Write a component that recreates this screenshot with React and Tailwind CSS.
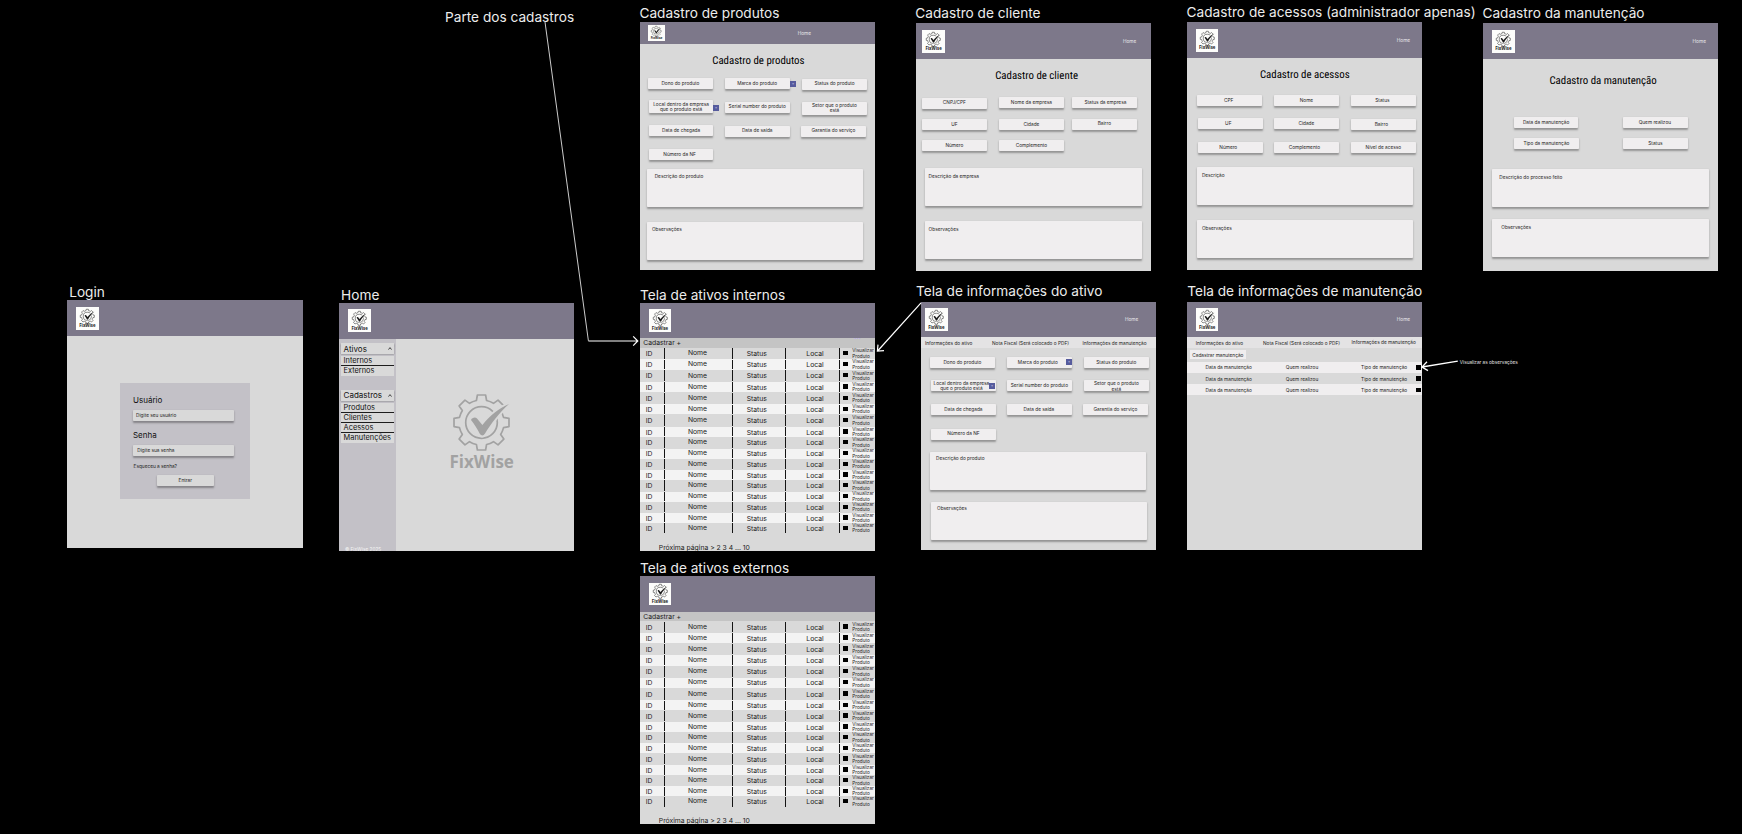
import React from "react";
import { clsx } from "clsx";

/* ---------- logo ---------- */

function gearPath(cx, cy, outer, root) {
  const pt = (r, deg) => {
    const a = (deg * Math.PI) / 180;
    return `${(cx + r * Math.sin(a)).toFixed(2)} ${(cy - r * Math.cos(a)).toFixed(2)}`;
  };
  const parts = [];
  for (let i = 0; i < 8; i += 1) {
    const a = i * 45;
    parts.push(`${i ? "L" : "M"}${pt(root, a - 13)} L${pt(outer, a - 8.5)} L${pt(outer, a + 8.5)} L${pt(root, a + 13)}`);
    parts.push(`A${root} ${root} 0 0 1 ${pt(root, a + 32)}`);
  }
  return `${parts.join(" ")} Z`;
}

const GEAR = gearPath(28.5, 28.5, 27.8, 22.6);
const CHECK = "M18 26 C19 23.6 22.5 22.8 24 24.6 L29.4 31 C37 21.5 46 14 56 10 C46.5 18.5 38 29.5 32 39.6 C30.6 42 28.4 42.2 26.8 39.8 C24.4 35 21.4 30.4 18 26 Z";

function Gear({ className, ring, back, thick }) {
  return (
    <svg viewBox="0 0 57 57" className={clsx("block shrink-0 overflow-visible", className)} fill="none">
      <path d={GEAR} stroke={ring} strokeWidth={thick} strokeLinejoin="round" />
      <circle cx="28.5" cy="28.5" r="15.8" stroke={ring} strokeWidth={thick} />
      <path d={CHECK} fill={ring} stroke={back} strokeWidth="4" paintOrder="stroke" />
    </svg>
  );
}

function Logo({ small, className }) {
  return (
    <div
      className={clsx(
        "flex shrink-0 flex-col items-center bg-[#fdfdfb]",
        small ? "h-[16px] w-[16.4px] pt-[1px]" : "h-[22.6px] w-[22.6px] pt-[1.6px]",
        className
      )}
    >
      <Gear className={small ? "h-[10.4px] w-[10.4px]" : "h-[14.6px] w-[14.6px]"} ring="#1f1f1f" back="#fdfdfb" thick="2" />
      <span
        className={clsx(
          "whitespace-nowrap font-['Open_Sans',sans-serif] font-bold text-[#1a1a1a]",
          small ? "text-[3.1px] leading-[3.4px]" : "text-[4.3px] leading-[4.4px]"
        )}
      >
        FixWise
      </span>
    </div>
  );
}

/* ---------- board parts ---------- */

function Board({ title, place, titleClass, frameClass, children }) {
  return (
    <section className={clsx("absolute flex w-[235.2px] flex-col", place)}>
      <h2 className={clsx("h-[14px] whitespace-nowrap text-[13.66px] leading-[14.4px] text-[#ececec]", titleClass)}>{title}</h2>
      <div className={clsx("flex h-[248.2px] w-full flex-col overflow-hidden bg-[#d9d9d9]", frameClass)}>{children}</div>
    </section>
  );
}

function Header({ logoClass = "ml-[8.7px] mt-[6.7px]", homeClass, small }) {
  return (
    <header className={clsx("flex shrink-0 items-start bg-[#7d788a]", small ? "h-[21.8px]" : "h-[35.4px]")}>
      <Logo small={small} className={logoClass} />
      {homeClass && <span className={clsx("leading-[6px] text-[#e9e8ec]", homeClass)}>Home</span>}
    </header>
  );
}

function FormTitle({ children, className }) {
  return (
    <h3
      className={clsx(
        "shrink-0 text-center font-['Roboto_Condensed','Roboto',sans-serif] text-[10.85px] leading-[12px] whitespace-nowrap text-black [text-rendering:geometricPrecision]",
        className
      )}
    >
      {children}
    </h3>
  );
}

function Badge({ className }) {
  return (
    <i className={clsx("absolute flex h-[5.6px] w-[5.6px] items-center justify-center bg-[#565b9d] text-[4px] leading-none text-[#dcdcf0] not-italic", className)}>
      +
    </i>
  );
}

const SHADOW = "shadow-[0_1.5px_2px_rgba(0,0,0,0.32)]";

function Field({ children, className, height = "h-[11px]", badge, shift }) {
  return (
    <div
      className={clsx(
        "relative flex w-[64.8px] shrink-0 items-center justify-center rounded-[0.7px] bg-[#f0eeef] text-center leading-[5.6px] whitespace-nowrap",
        SHADOW,
        height,
        className
      )}
    >
      <span className={shift}>{children}</span>
      {badge && <Badge className={badge} />}
    </div>
  );
}

function Row({ className, children }) {
  return <div className={clsx("flex shrink-0 items-start", className)}>{children}</div>;
}

function Area({ children, className }) {
  return (
    <div className={clsx("h-[38px] w-[216.3px] shrink-0 rounded-[0.7px] bg-[#f0eeef] leading-[6px]", SHADOW, className)}>{children}</div>
  );
}

/* ---------- asset tables ---------- */

const ROW_HEIGHTS = [
  "h-[11.3px]", "h-[10.7px]", "h-[11.7px]", "h-[10.7px]", "h-[12px]", "h-[10px]", "h-[12.6px]", "h-[10px]", "h-[11.7px]",
  "h-[10px]", "h-[11.3px]", "h-[10px]", "h-[11.7px]", "h-[10.3px]", "h-[11px]", "h-[10px]", "h-[11px]",
];

function Bar() {
  return <span className="my-[0.5px] w-px shrink-0 self-stretch bg-[#151515]" />;
}

function AssetTable({ dots }) {
  return (
    <>
      <div className="relative shrink-0">
        <Header logoClass="ml-[8.7px] mt-[6.4px]" />
        {dots && <span className="absolute right-[14.5px] bottom-0 text-[8px] leading-[4px] text-[#b7a8ee]">...</span>}
      </div>
      <div className="flex h-[9.6px] shrink-0 items-center bg-[#c4c4c4] pt-[0.6px] pl-[3.2px] text-[6.8px] leading-[8px]">Cadastrar +</div>
      {ROW_HEIGHTS.map((h, i) => (
        <div key={i} className={clsx("flex shrink-0 items-center text-[6.8px] leading-[8px] text-[#1c1c1c]", h, i % 2 === 1 && "bg-[#f3f3f3]")}>
          <span className="w-[24.3px] shrink-0 pt-[1.4px] pl-[5.8px]">ID</span>
          <Bar />
          <span className="w-[67px] shrink-0 pb-[0.6px] pl-[22.6px]">Nome</span>
          <Bar />
          <span className="w-[52px] shrink-0 pt-[1.4px] pl-[13.4px]">Status</span>
          <Bar />
          <span className="w-[53px] shrink-0 pt-[1.4px] pl-[20px]">Local</span>
          <Bar />
          <span className="mb-[1px] ml-[3px] h-[4.4px] w-[4.8px] shrink-0 bg-black" />
          <span className="ml-[4.2px] text-[4.7px] leading-[5.3px]">
            Visualizar
            <br />
            Produto
          </span>
        </div>
      ))}
      <div className="mt-[9px] shrink-0 pl-[18.8px] text-[6.8px] leading-[9px] text-[#1c1c1c]">Próxima página &gt; 2 3 4 ... 10</div>
    </>
  );
}

/* ---------- sidebar ---------- */

function MenuHead({ children, className }) {
  return (
    <div
      className={clsx(
        "relative flex h-[11.2px] shrink-0 items-center justify-between bg-[#d9d9d9] pr-[2px] pl-[2.7px] text-[8px] leading-[10px] shadow-[0_1.4px_1.4px_rgba(0,0,0,0.45)]",
        className
      )}
    >
      {children}
      <svg viewBox="0 0 4 3" className="h-[3px] w-[4px]" fill="none" stroke="#222" strokeWidth="0.8">
        <path d="M0.5 2.6 L2 0.6 L3.5 2.6" />
      </svg>
    </div>
  );
}

function MenuItem({ children, last }) {
  return (
    <div
      className={clsx(
        "flex shrink-0 items-center bg-[#d9d9d9] pl-[2.7px] text-[7.4px] leading-[9px]",
        last ? "h-[9.6px]" : "h-[10.2px] border-b border-[#1d1d1d] pt-[0.8px]"
      )}
    >
      {children}
    </div>
  );
}

/* ---------- page ---------- */

const MAINT_ROWS = [
  { h: "h-[11px]", bg: "bg-[#f0eeef]" },
  { h: "h-[11.4px]", bg: "" },
  { h: "h-[11px]", bg: "bg-[#f0eeef]" },
];

export default function App() {
  return (
    <main className="relative h-[834px] w-[1742px] overflow-hidden bg-black font-['Inter',sans-serif] text-[4.76px] text-[#1c1c1c]">
      <p className="absolute top-[10px] left-[445px] text-[13.66px] leading-[14px] whitespace-nowrap text-[#ececec]">Parte dos cadastros</p>

      <Board title="Cadastro de produtos" place="top-[6px] left-[640px]" titleClass="-ml-[0.6px]" frameClass="mt-[2px]">
        <Header small logoClass="ml-[8.3px] mt-[3.4px]" homeClass="ml-[133px] mt-[8.2px]" />
        <FormTitle className="mt-[11px] h-[23.2px] pl-[1.6px]">Cadastro de produtos</FormTitle>
        <Row className="h-[22px] pl-[8px]">
          <Field>Dono do produto</Field>
          <Field className="ml-[12px]" badge="top-[3px] left-[65.4px]">Marca do produto</Field>
          <Field className="mt-[0.7px] ml-[12.5px]">Status do produto</Field>
        </Row>
        <Row className="h-[25.3px] pl-[8.7px]">
          <Field height="h-[13px]" badge="top-[5px] left-[64.6px]" shift="pt-[1.4px]">
            Local dentro da empresa
            <br />
            que o produto está
          </Field>
          <Field className="mt-[1.6px] ml-[11.3px]">Serial number do produto</Field>
          <Field className="mt-[1.6px] ml-[12.5px]" height="h-[13.4px]">
            Setor que o produto
            <br />
            está
          </Field>
        </Row>
        <Row className="h-[24px] pl-[8.7px]">
          <Field>Data de chegada</Field>
          <Field className="mt-[0.3px] ml-[11.3px]">Data de saída</Field>
          <Field className="mt-[0.3px] ml-[11.5px]">Garantia do serviço</Field>
        </Row>
        <Row className="h-[19.7px] pl-[8.7px]">
          <Field shift="pr-[3px]">Número da NF</Field>
        </Row>
        <Area className="ml-[6.7px] pt-[4px] pl-[8px]">Descrição do produto</Area>
        <Area className="mt-[15px] ml-[6.7px] pt-[4px] pl-[5.3px]">Observações</Area>
      </Board>

      <Board title="Cadastro de cliente" place="top-[6.3px] left-[916px]" titleClass="-ml-[0.7px]" frameClass="mt-[3px]">
        <Header logoClass="ml-[6.3px] mt-[6.7px]" homeClass="ml-[178px] mt-[15px]" />
        <FormTitle className="mt-[11.4px] h-[26.9px] pl-[6px]">Cadastro de cliente</FormTitle>
        <Row className="h-[22.3px] pl-[6px]">
          <Field className="mt-[0.7px]">CNPJ/CPF</Field>
          <Field className="ml-[12.2px]">Nome da empresa</Field>
          <Field className="ml-[8.2px]" shift="pt-[1px] pl-[2px]">Status da empresa</Field>
        </Row>
        <Row className="h-[21px] pl-[6px]">
          <Field>UF</Field>
          <Field className="ml-[12.2px]">Cidade</Field>
          <Field className="ml-[8.2px]" shift="pb-[1px]">Bairro</Field>
        </Row>
        <Row className="h-[27.7px] pl-[6px]">
          <Field shift="pt-[0.6px]">Número</Field>
          <Field className="ml-[12.2px]" shift="pt-[0.6px]">Complemento</Field>
        </Row>
        <Area className="ml-[9.3px] pt-[5px] pl-[3.3px]">Descrição da empresa</Area>
        <Area className="mt-[15px] ml-[9.3px] pt-[5px] pl-[3.3px]">Observações</Area>
      </Board>

      <Board title="Cadastro de acessos (administrador apenas)" place="top-[5px] left-[1187.2px]" titleClass="-ml-[0.6px]" frameClass="mt-[3.2px]">
        <Header logoClass="ml-[8.7px] mt-[6.8px]" homeClass="ml-[178.3px] mt-[14.8px]" />
        <FormTitle className="mt-[11.6px] h-[25.8px]">Cadastro de acessos</FormTitle>
        <Row className="h-[23.4px] pl-[10px]">
          <Field shift="pr-[2px]">CPF</Field>
          <Field className="ml-[12px]">Nome</Field>
          <Field className="ml-[12.2px]" shift="pr-[2px]">Status</Field>
        </Row>
        <Row className="h-[24px] pl-[10.7px]">
          <Field shift="pr-[4px]">UF</Field>
          <Field className="ml-[11.3px]">Cidade</Field>
          <Field className="mt-[0.6px] ml-[12.2px]" shift="pr-[4px]">Bairro</Field>
        </Row>
        <Row className="h-[24.6px] pl-[10.7px]">
          <Field shift="pr-[4px]">Número</Field>
          <Field className="ml-[11.3px]" shift="pr-[4px]">Complemento</Field>
          <Field className="-mt-[0.7px] ml-[12.2px]" shift="pt-[1px]">Nível de acesso</Field>
        </Row>
        <Area className="ml-[10px] pt-[4.7px] pl-[4.7px]">Descrição</Area>
        <Area className="mt-[15.4px] ml-[9.7px] pt-[4.7px] pl-[5px]">Observações</Area>
      </Board>

      <Board title="Cadastro da manutenção" place="top-[6.3px] left-[1483px]" titleClass="-ml-[0.6px]" frameClass="mt-[3px]">
        <Header logoClass="ml-[9px] mt-[6.7px]" homeClass="ml-[178px] mt-[15px]" />
        <FormTitle className="mt-[16px] h-[42.3px] pl-[5px]">Cadastro da manutenção</FormTitle>
        <Row className="h-[21px] pl-[30.7px]">
          <Field shift="pt-[0.8px]">Data da manutenção</Field>
          <Field className="ml-[44.5px]" shift="pr-[1px]">Quem realizou</Field>
        </Row>
        <Row className="h-[31px] pl-[31px]">
          <Field>Tipo da manutenção</Field>
          <Field className="ml-[44.2px]">Status</Field>
        </Row>
        <Area className="ml-[9.3px] pt-[5px] pl-[7px]">Descrição do processo feito</Area>
        <Area className="mt-[12px] ml-[9.3px] pt-[5px] pl-[9px]">Observações</Area>
      </Board>

      <Board title="Login" place="top-[285px] left-[67.4px]" titleClass="pl-[1.8px]" frameClass="mt-[1.2px]">
        <Header logoClass="ml-[8.7px] mt-[7px]" />
        <div className="mt-[47px] ml-[52.6px] flex h-[116.7px] w-[130px] flex-col bg-[#c3c1c7] pt-[12px] pl-[13px]">
          <label className="text-[8px] leading-[10px] text-[#111]">Usuário</label>
          <div className={clsx("mt-[5.3px] flex h-[11.2px] w-[101px] items-center rounded-[0.7px] bg-[#d9d9d9] pl-[3px]", SHADOW)}>Digite seu usuário</div>
          <label className="mt-[8.8px] text-[8px] leading-[10px] text-[#111]">Senha</label>
          <div className={clsx("mt-[5.3px] flex h-[11.2px] w-[101px] items-center rounded-[0.7px] bg-[#d9d9d9] pl-[4.3px]", SHADOW)}>Digite sua senha</div>
          <span className="mt-[6.5px] pl-[0.6px] leading-[6px]">Esqueceu a senha?</span>
          <button className={clsx("mt-[6.3px] ml-[24px] flex h-[11px] w-[56.7px] items-center justify-center rounded-[0.7px] bg-[#d9d9d9]", SHADOW)}>
            Entrar
          </button>
        </div>
      </Board>

      <Board title="Home" place="top-[287.8px] left-[339.3px]" titleClass="pl-[1.8px]" frameClass="mt-[1.4px]">
        <Header logoClass="ml-[9px] mt-[6.2px]" />
        <div className="flex min-h-0 flex-1">
          <nav className="flex w-[56.4px] shrink-0 flex-col bg-[#c3c1c7] px-[1.6px] pt-[4.4px] text-[#111]">
            <MenuHead className="mb-[1.6px]">Ativos</MenuHead>
            <MenuItem>Internos</MenuItem>
            <MenuItem last>Externos</MenuItem>
            <MenuHead className="mt-[14px] mb-[1.8px]">Cadastros</MenuHead>
            <MenuItem>Produtos</MenuItem>
            <MenuItem>Clientes</MenuItem>
            <MenuItem>Acessos</MenuItem>
            <MenuItem last>Manutenções</MenuItem>
            <small className="mt-auto -mb-[0.6px] pl-[4px] text-[4.76px] leading-[6px] whitespace-nowrap text-[#f4f4f4]">© FixWise 2025</small>
          </nav>
          <div className="flex w-[172px] flex-col items-center pt-[55px]">
            <Gear className="h-[57px] w-[57px]" ring="#a2a2a2" back="#d9d9d9" thick="1.7" />
            <span className="mt-[1.4px] font-['Open_Sans',sans-serif] text-[17px] leading-[20px] font-bold text-[#a2a2a2]">FixWise</span>
          </div>
        </div>
      </Board>

      <Board title="Tela de ativos internos" place="top-[287.8px] left-[640px]" frameClass="mt-[1.2px]">
        <AssetTable dots />
      </Board>

      <Board title="Tela de informações do ativo" place="top-[284.3px] left-[921px]" titleClass="-ml-[5px]" frameClass="mt-[3.4px]">
        <Header logoClass="ml-[4px] mt-[6.7px]" homeClass="ml-[177.4px] mt-[14.7px]" />
        <div className="flex h-[11px] shrink-0 items-center bg-[#e4e3e4] pl-[4px] leading-[6px] whitespace-nowrap">
          <span className="w-[67px] pt-[1px]">Informações do ativo</span>
          <span className="w-[90.4px]">Nota Fiscal (Será colocado o PDF)</span>
          <span>Informações de manutenção</span>
        </div>
        <Row className="mt-[9px] h-[23.3px] pl-[9px]">
          <Field>Dono do produto</Field>
          <Field className="ml-[12.2px]" badge="top-[2.4px] left-[59.2px]" shift="pr-[3px]">Marca do produto</Field>
          <Field className="ml-[12.2px]">Status do produto</Field>
        </Row>
        <Row className="h-[23.7px] pl-[10px]">
          <Field badge="top-[2.7px] left-[58.4px]" shift="pr-[4px] pt-[1px]">
            Local dentro da empresa
            <br />
            que o produto está
          </Field>
          <Field className="ml-[11.2px]">Serial number do produto</Field>
          <Field className="ml-[12.2px]" shift="pt-[1.4px]">
            Setor que o produto
            <br />
            está
          </Field>
        </Row>
        <Row className="h-[24.6px] pl-[10px]">
          <Field shift="pt-[1px]">Data de chegada</Field>
          <Field className="ml-[11.2px]" shift="pt-[1px] pr-[1px]">Data de saída</Field>
          <Field className="ml-[11.2px]">Garantia do serviço</Field>
        </Row>
        <Row className="h-[23.4px] pl-[10px]">
          <Field>Número da NF</Field>
        </Row>
        <Area className="ml-[8.7px] pt-[3px] pl-[6.3px]">Descrição do produto</Area>
        <Area className="mt-[11.6px] ml-[10px] pt-[3.3px] pl-[6px]">Observações</Area>
      </Board>

      <Board title="Tela de informações de manutenção" place="top-[284.3px] left-[1187.2px]" frameClass="mt-[3.4px]">
        <Header logoClass="ml-[8.7px] mt-[6.7px]" homeClass="ml-[178.3px] mt-[14.7px]" />
        <div className="flex h-[11px] shrink-0 items-start bg-[#e4e3e4] pl-[8.6px] leading-[6px] whitespace-nowrap">
          <span className="w-[67.2px] pt-[3px]">Informações do ativo</span>
          <span className="w-[88.6px] pt-[2.7px]">Nota Fiscal (Será colocado o PDF)</span>
          <span className="pt-[1.6px]">Informações de manutenção</span>
        </div>
        <div className="mt-[1.9px] mb-[3px] ml-[2.6px] flex h-[9px] w-[56.2px] shrink-0 items-center justify-center bg-[#f0eeef] pt-[1px] leading-[6px] whitespace-nowrap">
          Cadastrar manutenção
        </div>
        {MAINT_ROWS.map((r, i) => (
          <div key={i} className={clsx("flex shrink-0 items-center pl-[18.3px] leading-[6px] whitespace-nowrap", r.h, r.bg)}>
            <span className="w-[80.3px]">Data da manutenção</span>
            <span className="w-[75.3px]">Quem realizou</span>
            <span className="w-[55px]">Tipo de manutenção</span>
            <span className="h-[4.6px] w-[4.8px] shrink-0 bg-black" />
          </div>
        ))}
      </Board>

      <Board title="Tela de ativos externos" place="top-[561px] left-[640px]" frameClass="mt-[1.3px]">
        <AssetTable />
      </Board>

      <p className="absolute top-[358.6px] left-[1459.8px] text-[4.7px] leading-[6px] whitespace-nowrap text-[#e6e6e6]">Visualizar as observações</p>

      <svg className="pointer-events-none absolute inset-0" width="1742" height="834" viewBox="0 0 1742 834" fill="none" stroke="#fff">
        <path d="M545 22 L588.4 340.8" strokeWidth="0.8" />
        <path d="M588.4 341 H637.5 M633.2 336.4 L637.8 341 L633.2 345.6" strokeWidth="1.2" />
        <path d="M921 302.8 L877.6 351 M878 344.6 L877.4 351.2 L884 350.6" strokeWidth="1.2" />
        <path d="M1457.8 361.2 L1422 367 M1427 361.8 L1422 367 L1428 370.6" strokeWidth="1.3" />
      </svg>
    </main>
  );
}
